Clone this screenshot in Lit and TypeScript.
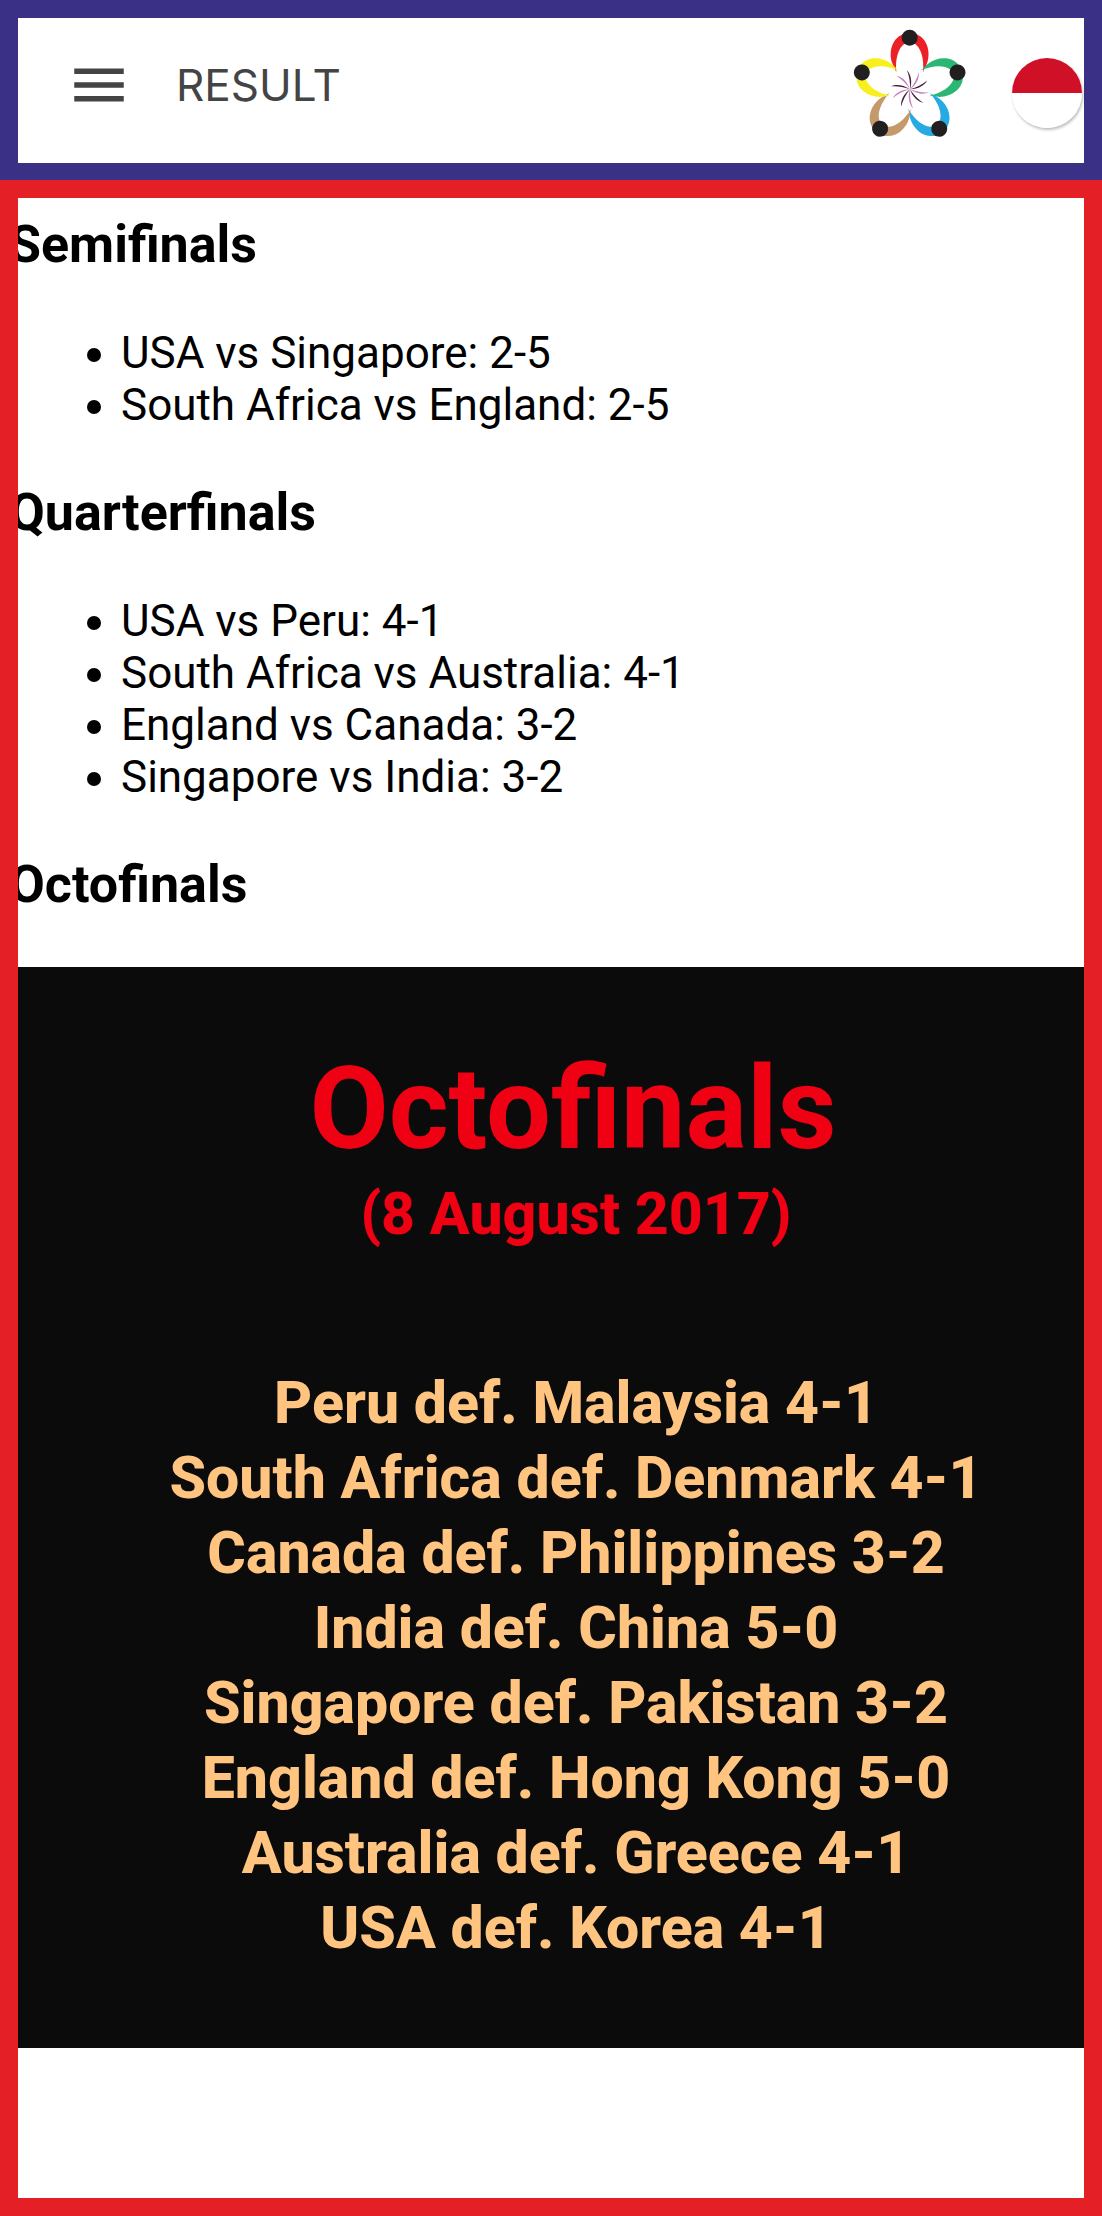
import { LitElement, html, svg, css } from "lit";
import { customElement, property } from "lit/decorators.js";

const PETALS = ["#ec2027", "#2bb673", "#27aae1", "#c49a6c", "#f7f01e"];

const SECTIONS = [
  {
    title: "Semifinals",
    results: ["USA vs Singapore: 2-5", "South Africa vs England: 2-5"],
  },
  {
    title: "Quarterfinals",
    results: [
      "USA vs Peru: 4-1",
      "South Africa vs Australia: 4-1",
      "England vs Canada: 3-2",
      "Singapore vs India: 3-2",
    ],
  },
];

const OCTOFINALS = [
  "Peru def. Malaysia 4-1",
  "South Africa def. Denmark 4-1",
  "Canada def. Philippines 3-2",
  "India def. China 5-0",
  "Singapore def. Pakistan 3-2",
  "England def. Hong Kong 5-0",
  "Australia def. Greece 4-1",
  "USA def. Korea 4-1",
];

@customElement("flower-logo")
class FlowerLogo extends LitElement {
  static styles = css`
    :host { display: block; }
    .logo { display: block; width: 140px; height: 130px; }
  `;

  render() {
    return html`<svg class="logo" viewBox="0 0 420 390" role="img" aria-label="Logo">
      ${PETALS.map(
        (color, i) => svg`<g transform="rotate(${i * 72} 209 204)">
          <path fill=${color} d="M194 41C158 50 144 94 157 130C161 142 167 148 169 158C165 118 174 82 197 69Z" />
          <path fill=${color} d="M224 41C260 50 274 94 261 130C257 142 251 148 249 158C253 118 244 82 221 69Z" />
          <circle cx="209" cy="53" r="24" fill="#221f20" />
        </g>`,
      )}
      <g transform="translate(210 208)">
        ${Array.from(
          { length: 10 },
          (_, i) => svg`<path transform="rotate(${i * 36})"
            fill=${i % 2 ? "#c67fc0" : "#47203f"}
            d="M-9 -57C2 -46 8 -24 0 0C1 -20 -2 -40 -9 -57Z" />`,
        )}
      </g>
    </svg>`;
  }
}

@customElement("app-bar")
class AppBar extends LitElement {
  @property() heading = "";

  static styles = css`
    :host {
      display: flex;
      align-items: center;
      box-sizing: border-box;
      min-height: 180px;
      padding: 0 2px 12px 48px;
      border: 18px solid #3a3186;
      border-bottom-width: 17px;
      background: #fff;
    }
    button { padding: 0; border: 0; background: none; cursor: pointer; }
    svg { display: block; }
    .menu-icon { width: 66px; height: 66px; fill: #444; }
    h1 {
      flex: 1;
      margin: 0 0 0 44px;
      color: #444;
      font: 400 44px/50px Inter, sans-serif;
    }
    .flag { margin: 16px 0 0 32px; border-radius: 50%; box-shadow: 1px 2px 3px #0004; }
    .flag-icon { width: 70px; height: 70px; }
  `;

  render() {
    return html`
      <button aria-label="Open menu">
        <svg class="menu-icon" viewBox="0 0 24 24"><path d="M3 18h18v-2H3v2zm0-5h18v-2H3v2zm0-7v2h18V6H3z" /></svg>
      </button>
      <h1>${this.heading}</h1>
      <flower-logo></flower-logo>
      <button class="flag" aria-label="Language: Indonesian">
        <svg class="flag-icon" viewBox="0 0 70 70">
          <circle cx="35" cy="35" r="35" fill="#fff" />
          <path d="M0 35a35 35 0 0 1 70 0z" fill="#cf1027" />
        </svg>
      </button>
    `;
  }
}

@customElement("result-poster")
class ResultPoster extends LitElement {
  static styles = css`
    :host {
      display: block;
      padding: 75px 0 83px 44px;
      background: #0b0b0b;
      font-family: Roboto, sans-serif;
      font-weight: 800;
      text-align: center;
    }
    .title { margin: 0; color: #ef0012; font-size: 115px; line-height: 134px; }
    .date { margin: 0 0 114px; padding-left: 6px; color: #ef0012; font-size: 59px; line-height: 75px; }
    .rows { margin: 0; padding: 0 0 0 6px; list-style: none; color: #ffc480; font-size: 59px; line-height: 75px; }
  `;

  render() {
    return html`
      <h3 class="title">Octofinals</h3>
      <p class="date">(8 August 2017)</p>
      <ul class="rows">${OCTOFINALS.map((row) => html`<li>${row}</li>`)}</ul>
    `;
  }
}

@customElement("app-root")
class AppRoot extends LitElement {
  static styles = css`
    :host { display: flex; flex-direction: column; min-height: 100vh; }
    main {
      flex: 1;
      overflow: hidden;
      padding: 17px 0 149px;
      border: 18px solid #e41f25;
      background: #fff;
      color: #000;
      font: 400 44px/52px Roboto, sans-serif;
    }
    h2 { margin: 0 0 52px -9px; font-size: 52px; line-height: 60px; }
    ul { margin: 0 0 52px -7px; padding-left: 110px; }
  `;

  render() {
    return html`
      <app-bar heading="RESULT"></app-bar>
      <main>
        ${SECTIONS.map(
          (section) => html`<section>
            <h2>${section.title}</h2>
            <ul>${section.results.map((result) => html`<li>${result}</li>`)}</ul>
          </section>`,
        )}
        <h2>Octofinals</h2>
        <result-poster></result-poster>
      </main>
    `;
  }
}
